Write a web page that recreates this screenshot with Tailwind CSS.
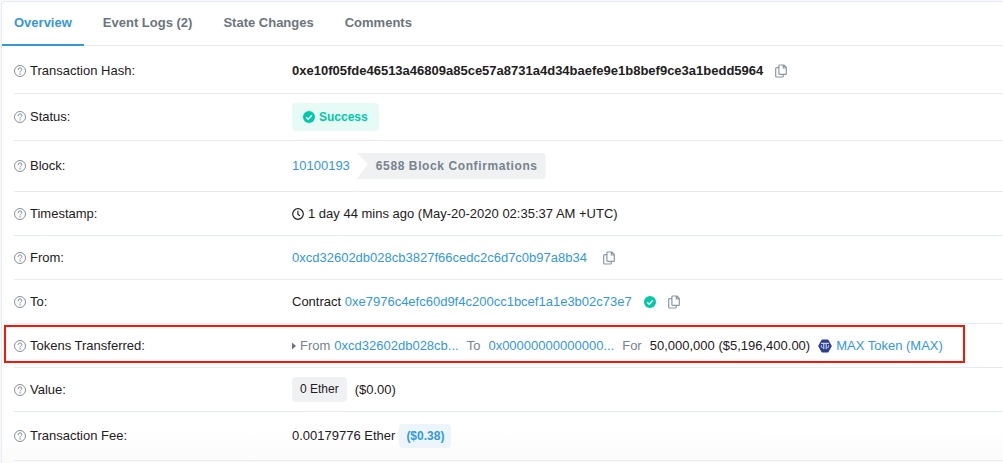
<!DOCTYPE html>
<html lang="en">
<head>
  <meta charset="UTF-8" />
  <meta name="viewport" content="width=device-width, initial-scale=1" />
  <title>Transaction Details</title>
  <script src="https://cdn.jsdelivr.net/npm/@tailwindcss/browser@4"></script>
</head>
<body class="bg-[#f8f9fb] pl-px pt-px font-['Liberation_Sans',Arial,sans-serif] text-[13px] leading-5 text-[#1e2022] overflow-hidden">

  <!-- Shared icons -->
  <svg class="hidden">
    <symbol id="icon-help" viewBox="0 0 12 12">
      <circle cx="6" cy="6" r="5.5" fill="none" stroke="currentColor" stroke-width=".9" />
      <path d="M4.2 4.6C4.3 3.5 5 2.9 6 2.9c1.1 0 1.9.6 1.9 1.5 0 1.3-1.8 1.3-1.8 2.6" fill="none" stroke="currentColor" stroke-width="1" stroke-linecap="round" />
      <circle cx="6.1" cy="8.9" r=".7" fill="currentColor" />
    </symbol>
    <symbol id="icon-copy" viewBox="0 0 12 14">
      <path d="M4.8 1h4l2.5 2.5v6.3a.6.6 0 0 1-.6.6H4.8a.9.9 0 0 1-.9-.9V1.9a.9.9 0 0 1 .9-.9zM8.3 1v3h3M3.9 3.6H1.6a.9.9 0 0 0-.9.9v7.6a.9.9 0 0 0 .9.9h5.8a.9.9 0 0 0 .9-.9v-1.7" fill="none" stroke="currentColor" stroke-width="1.2" stroke-linejoin="round" />
    </symbol>
    <symbol id="icon-check" viewBox="0 0 12 12">
      <circle cx="6" cy="6" r="6" fill="currentColor" />
      <path d="M3.2 6.2l2 2 3.7-3.9" fill="none" stroke="#fff" stroke-width="1.5" />
    </symbol>
  </svg>

  <main class="bg-white border-t border-l border-[#e7eaf3] rounded-tl">
    <nav class="flex border-b border-[#e7eaf3] font-bold text-[#6c757e]">
      <a href="#overview" class="-mb-px px-3 py-[11px] border-b-2 border-[#3498db] text-[#3498db]">Overview</a>
      <a href="#eventlog" class="ml-[7px] px-3 py-[11px]">Event Logs (2)</a>
      <a href="#statechange" class="ml-[7px] px-3 py-[11px]">State Changes</a>
      <a href="#comments" class="ml-[7px] px-3 py-[11px]">Comments</a>
    </nav>

    <dl class="pl-3 bg-linear-to-b from-white from-90% to-[#fafafb]">
      <div class="flex items-center pt-[15px] pb-3 border-b border-[#e7eaf3]">
        <dt class="flex items-center gap-1 w-[278px] shrink-0">
          <svg class="size-3 text-[#77838f]"><use href="#icon-help" /></svg>Transaction Hash:
        </dt>
        <dd class="flex items-center gap-3">
          <span class="font-bold">0xe10f05fde46513a46809a85ce57a8731a4d34baefe9e1b8bef9ce3a1bedd5964</span>
          <button type="button" aria-label="Copy transaction hash" class="text-[#8c98a4]"><svg class="w-3 h-[14px]"><use href="#icon-copy" /></svg></button>
        </dd>
      </div>

      <div class="flex items-center py-[9px] border-b border-[#e7eaf3]">
        <dt class="flex items-center gap-1 w-[278px] shrink-0">
          <svg class="size-3 text-[#77838f]"><use href="#icon-help" /></svg>Status:
        </dt>
        <dd class="flex items-center gap-1 px-[11px] py-1 rounded bg-[#e6faf6] text-[#00c9a7] text-xs leading-5 font-bold">
          <svg class="size-3"><use href="#icon-check" /></svg>Success
        </dd>
      </div>

      <div class="flex items-center py-3 border-b border-[#e7eaf3]">
        <dt class="flex items-center gap-1 w-[278px] shrink-0">
          <svg class="size-3 text-[#77838f]"><use href="#icon-help" /></svg>Block:
        </dt>
        <dd class="flex items-center gap-[7px]">
          <a href="#block" class="text-[#3498db]">10100193</a>
          <span class="pl-[19px] pr-2 py-[3px] rounded-r bg-[#f0f1f3] text-[#77838f] text-xs leading-5 font-bold tracking-wider [clip-path:polygon(0_0,100%_0,100%_100%,0_100%,11px_42%)]">6588 Block Confirmations</span>
        </dd>
      </div>

      <div class="flex items-center pt-3 pb-[11px] border-b border-[#e7eaf3]">
        <dt class="flex items-center gap-1 w-[278px] shrink-0">
          <svg class="size-3 text-[#77838f]"><use href="#icon-help" /></svg>Timestamp:
        </dt>
        <dd class="flex items-center gap-1">
          <svg class="size-3" viewBox="0 0 12 12" fill="none" stroke="currentColor" stroke-width="1.2"><circle cx="6" cy="6" r="5.3" /><path d="M5.9 2.8v3.4l2 1.6" /></svg>
          1 day 44 mins ago (May-20-2020 02:35:37 AM +UTC)
        </dd>
      </div>

      <div class="flex items-center pt-3 pb-[11px] border-b border-[#e7eaf3]">
        <dt class="flex items-center gap-1 w-[278px] shrink-0">
          <svg class="size-3 text-[#77838f]"><use href="#icon-help" /></svg>From:
        </dt>
        <dd class="flex items-center gap-4">
          <a href="#from" class="text-[#3498db]">0xcd32602db028cb3827f66cedc2c6d7c0b97a8b34</a>
          <button type="button" aria-label="Copy sender address" class="text-[#8c98a4]"><svg class="w-3 h-[14px]"><use href="#icon-copy" /></svg></button>
        </dd>
      </div>

      <div class="flex items-center pt-3 pb-[11px] border-b border-[#e7eaf3]">
        <dt class="flex items-center gap-1 w-[278px] shrink-0">
          <svg class="size-3 text-[#77838f]"><use href="#icon-help" /></svg>To:
        </dt>
        <dd class="flex items-center gap-3">
          <span>Contract <a href="#to" class="text-[#3498db]">0xe7976c4efc60d9f4c200cc1bcef1a1e3b02c73e7</a></span>
          <svg class="size-3 text-[#00c9a7]"><use href="#icon-check" /></svg>
          <button type="button" aria-label="Copy contract address" class="text-[#8c98a4]"><svg class="w-3 h-[14px]"><use href="#icon-copy" /></svg></button>
        </dd>
      </div>

      <div class="relative flex items-center pt-3 pb-[11px] border-b border-[#e7eaf3]">
        <!-- Highlight round the transfer -->
        <div class="absolute top-px bottom-1 -left-[10px] right-[38px] border-2 border-[#fa1505]"></div>
        <dt class="flex items-center gap-1 w-[278px] shrink-0">
          <svg class="size-3 text-[#77838f]"><use href="#icon-help" /></svg>Tokens Transferred:
        </dt>
        <dd class="relative flex items-center gap-2 whitespace-nowrap">
          <span class="flex items-center gap-1 text-[#77838f]">
            <svg class="w-1 h-2 text-[#6c757e]" viewBox="0 0 4 8"><path d="M0 .5L4 4 0 7.5z" fill="currentColor" /></svg>
            From
            <a href="#from" class="text-[#3498db]">0xcd32602db028cb...</a>
          </span>
          <span class="text-[#77838f]">To</span>
          <a href="#null" class="text-[#3498db]">0x00000000000000...</a>
          <span class="text-[#77838f]">For</span>
          <span>50,000,000 ($5,196,400.00)</span>
          <span class="flex items-center gap-1">
            <svg class="w-[14px] h-[14px]" viewBox="0 0 14 14">
              <path d="M4.2 1h5.6L13.2 7l-3.4 6H4.2L.8 7z" fill="#2c3e8f" stroke="#2c3e8f" stroke-width="1.2" stroke-linejoin="round" />
              <path d="M3 4.3h8M3.4 6.3v1.2q0 1.2 1.2 1.2M10.6 6.3v1.2q0 1.2-1.2 1.2M5.8 4.3v5.9M8.2 4.3v5.9" fill="none" stroke="#e6e9f7" stroke-width="1" />
            </svg>
            <a href="#token" class="text-[#3498db]">MAX Token (MAX)</a>
          </span>
        </dd>
      </div>

      <div class="flex items-center py-[9px] border-b border-[#e7eaf3]">
        <dt class="flex items-center gap-1 w-[278px] shrink-0">
          <svg class="size-3 text-[#77838f]"><use href="#icon-help" /></svg>Value:
        </dt>
        <dd class="flex items-center gap-2">
          <span class="px-2 py-[3px] rounded bg-[#f0f1f3] text-xs leading-[19px]">0 Ether</span>
          <span>($0.00)</span>
        </dd>
      </div>

      <div class="flex items-center py-3 border-b border-[#e7eaf3]">
        <dt class="flex items-center gap-1 w-[278px] shrink-0">
          <svg class="size-3 text-[#77838f]"><use href="#icon-help" /></svg>Transaction Fee:
        </dt>
        <dd class="flex items-center gap-1">
          <span>0.00179776 Ether</span>
          <span class="px-[7px] py-[2px] rounded bg-[#ebf5fb] text-[#3498db] text-xs leading-5 font-bold">($0.38)</span>
        </dd>
      </div>
      <div class="h-3"></div>
    </dl>
  </main>
</body>
</html>
